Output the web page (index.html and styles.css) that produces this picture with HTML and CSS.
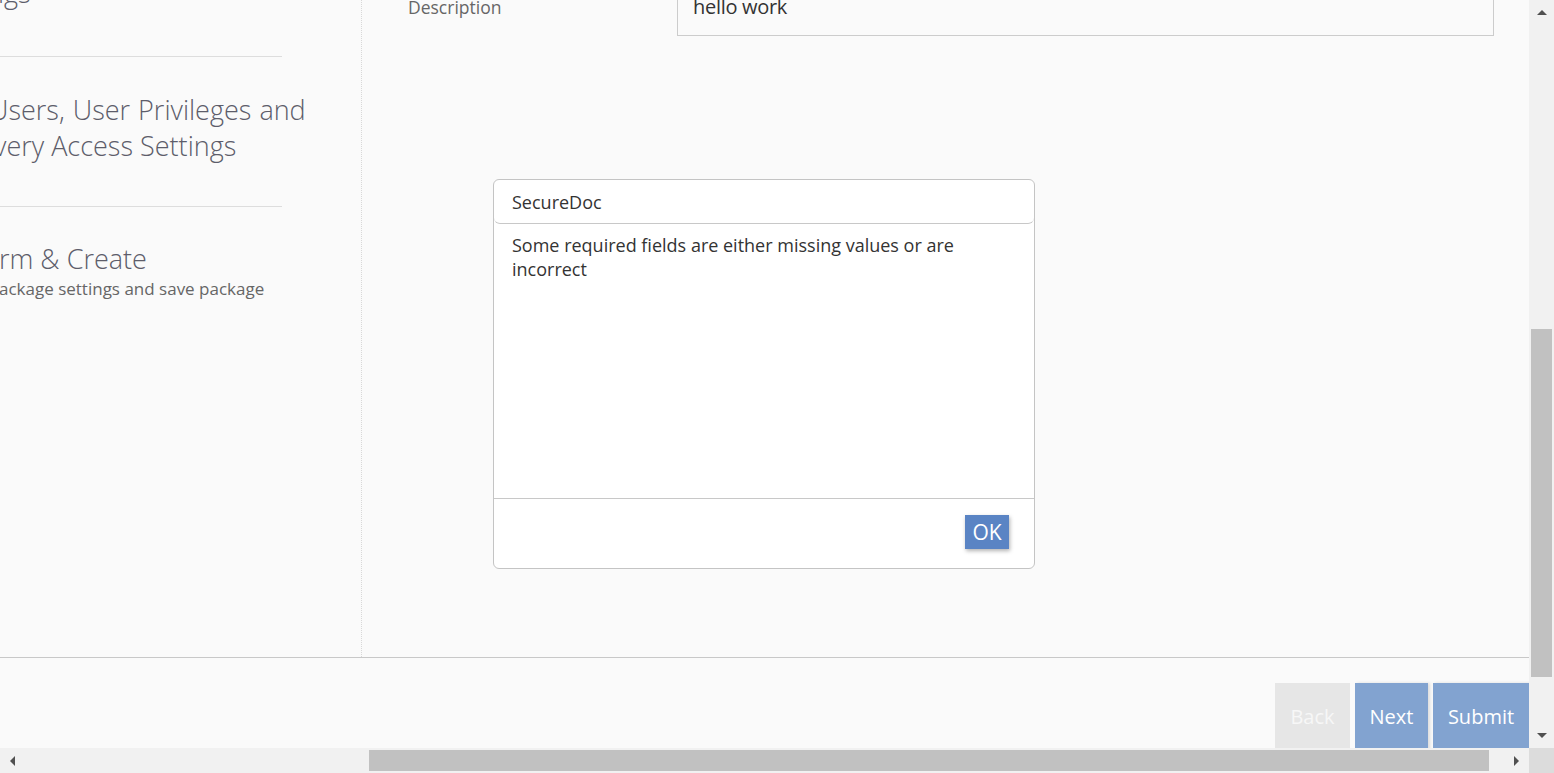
FILE: index.html
```html
<!DOCTYPE html>
<html>
<head>
<meta charset="utf-8">
<title>SecureDoc</title>
<link rel="stylesheet" href="styles.css">
</head>
<body>
<div class="window">
  <div class="viewport">
    <div class="page">
      <div class="top">
        <aside class="sidebar">
          <div class="step step-1">
            <div class="step-title t-ngs">ngs</div>
          </div>
          <div class="step step-2">
            <div class="step-title t-users">Users, User Privileges and</div>
            <div class="step-title t-very">very Access Settings</div>
          </div>
          <div class="step step-3">
            <div class="step-title t-rm">rm &amp; Create</div>
            <div class="step-sub">ackage settings and save package</div>
          </div>
        </aside>
        <main class="main">
          <div class="form-row">
            <label class="form-label">Description</label>
            <div class="form-input">hello work</div>
          </div>
        </main>
      </div>
      <footer class="footer">
        <button class="btn btn-back">Back</button>
        <button class="btn btn-primary">Next</button>
        <button class="btn btn-primary btn-submit">Submit</button>
      </footer>

      <div class="modal">
        <div class="modal-header">SecureDoc</div>
        <div class="modal-body">Some required fields are either missing values or are incorrect</div>
        <div class="modal-footer">
          <button class="btn-ok">OK</button>
        </div>
      </div>
    </div>
    <div class="vscroll">
      <div class="sb-btn"><span class="arrow arrow-up"></span></div>
      <div class="vtrack"><div class="vthumb"></div></div>
      <div class="sb-btn"><span class="arrow arrow-down"></span></div>
    </div>
  </div>
  <div class="hscroll">
    <div class="sb-btn-h"><span class="arrow arrow-left"></span></div>
    <div class="htrack"><div class="hthumb"></div></div>
    <div class="sb-btn-h"><span class="arrow arrow-right"></span></div>
    <div class="corner"></div>
  </div>
</div>
</body>
</html>
```

FILE: styles.css
```css
* { box-sizing: border-box; }
html, body {
  margin: 0;
  padding: 0;
  width: 1554px;
  height: 773px;
  overflow: hidden;
  font-family: "Open Sans", "Noto Sans", sans-serif;
  background: #fafafa;
}
.window {
  width: 1554px;
  height: 773px;
  display: flex;
  flex-direction: column;
}
.viewport {
  display: flex;
  height: 748px;
  flex: none;
}
.page {
  position: relative;
  width: 1529px;
  height: 748px;
  overflow: hidden;
  background: #fafafa;
  display: flex;
  flex-direction: column;
}
.top {
  display: flex;
  height: 657px;
  flex: none;
}
.sidebar {
  width: 362px;
  flex: none;
  border-right: 1px dotted #d8d8d8;
  white-space: nowrap;
}
.step {
  width: 282px;
  border-bottom: 1px solid #dddddd;
  display: flow-root;
}
.step-3 { border-bottom: none; }
.step-title {
  font-size: 27px;
  font-weight: 300;
  line-height: 36px;
  color: #5d5d6a;
}
.step-1 {
  height: 57px;
}
.t-ngs {
  margin-top: -25px;
  margin-left: -12px;
}
.step-2 {
  padding-top: 35px;
  height: 150px;
}
.t-users { margin-left: -11px; word-spacing: 1px; }
.t-very { margin-left: -6px; }
.step-3 {
  padding-top: 34px;
}
.t-rm { margin-left: -1px; }
.step-sub {
  font-size: 17px;
  line-height: 24px;
  color: #666666;
  margin-left: -1px;
}
.main {
  flex: 1;
  padding-left: 46px;
  padding-right: 35px;
}
.form-row {
  display: flex;
  align-items: flex-start;
  margin-top: -19px;
  height: 55px;
}
.form-label {
  width: 269px;
  font-size: 17.5px;
  line-height: 24px;
  color: #666666;
  padding-top: 14px;
}
.form-input {
  flex: 1;
  height: 55px;
  border: 1px solid #cccccc;
  background: #fafafa;
  padding: 0 15px;
  font-size: 20px;
  line-height: 50px;
  color: #333333;
  letter-spacing: -0.3px;
}
.footer {
  flex: 1;
  min-height: 0;
  border-top: 1px solid #c8c8c8;
  display: flex;
  justify-content: flex-end;
  align-items: flex-start;
  gap: 5px;
  padding-top: 25px;
}
.btn {
  flex: none;
  height: 68px;
  border: none;
  font-family: "Open Sans", sans-serif;
  font-size: 20px;
  line-height: 68px;
  padding: 0;
  color: #ffffff;
  cursor: pointer;
}
.btn-back {
  width: 75px;
  background: #e6e6e6;
  color: #f7f7f7;
}
.btn-primary {
  width: 73px;
  background: #82a3d0;
  box-shadow: 2px 0 3px rgba(0,0,0,0.12);
}
.btn-submit { width: 96px; }

.modal {
  position: absolute;
  left: 493px;
  top: 179px;
  width: 542px;
  height: 390px;
  background: #ffffff;
  border: 1px solid #c4c4c4;
  border-radius: 6px;
  display: flex;
  flex-direction: column;
}
.modal-header {
  height: 44px;
  border-bottom: 1px solid #c8c8c8;
  border-radius: 6px;
  padding: 0 18px;
  font-size: 18px;
  line-height: 44px;
  color: #333333;
}
.modal-body {
  flex: 1;
  padding: 9px 60px 0 18px;
  font-size: 18px;
  line-height: 24px;
  color: #333333;
}
.modal-footer {
  height: 70px;
  border-top: 1px solid #c8c8c8;
  display: flex;
  justify-content: flex-end;
  align-items: flex-start;
  padding: 16px 25px 0 0;
}
.btn-ok {
  width: 44px;
  height: 34px;
  border: none;
  background: #5a84c4;
  color: #ffffff;
  font-family: "Open Sans", sans-serif;
  font-size: 21px;
  font-weight: 400;
  line-height: 34px;
  padding: 0;
  box-shadow: 1px 2px 4px rgba(0,0,0,0.3);
}

/* scrollbars */
.vscroll {
  width: 25px;
  height: 748px;
  background: #f1f1f1;
  display: flex;
  flex-direction: column;
}
.sb-btn {
  height: 25px;
  display: flex;
  align-items: center;
  justify-content: center;
  padding-left: 1px;
}
.vtrack {
  flex: 1;
  padding: 304px 2px 46px 2px;
}
.vthumb {
  height: 100%;
  background: #c1c1c1;
}
.hscroll {
  height: 25px;
  flex: none;
  display: flex;
  background: #f1f1f1;
}
.sb-btn-h {
  width: 25px;
  display: flex;
  align-items: center;
  justify-content: center;
}
.htrack {
  width: 1479px;
  padding: 2px 15px 2px 344px;
}
.hthumb {
  height: 100%;
  background: #c1c1c1;
}
.corner {
  width: 25px;
  background: #dcdcdc;
}
.arrow {
  display: block;
  width: 0;
  height: 0;
  border-style: solid;
}
.arrow-up {
  border-width: 0 5px 5px 5px;
  border-color: transparent transparent #505050 transparent;
}
.arrow-down {
  border-width: 5px 5px 0 5px;
  border-color: #505050 transparent transparent transparent;
}
.arrow-left {
  border-width: 5px 5px 5px 0;
  border-color: transparent #505050 transparent transparent;
}
.arrow-right {
  border-width: 5px 0 5px 5px;
  border-color: transparent transparent transparent #505050;
}
```
